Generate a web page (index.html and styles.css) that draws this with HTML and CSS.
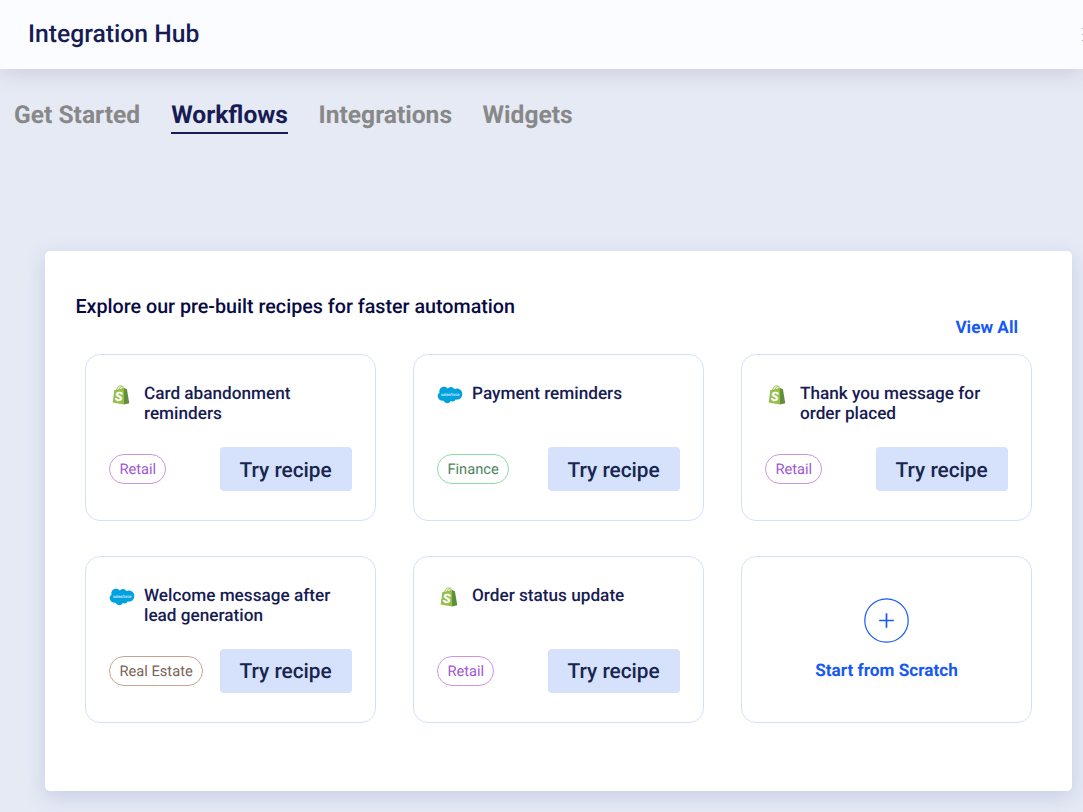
FILE: index.html
```html
<!DOCTYPE html>
<html lang="en">
  <head>
    <meta charset="UTF-8" />
    <meta name="viewport" content="width=device-width, initial-scale=1.0" />
    <title>Integration Hub</title>
    <link rel="stylesheet" href="styles.css">
  </head>
  <body>
    <svg class="sprite" width="0" height="0">
      <symbol id="shopify" viewBox="0 0 18 20">
        <path d="M4.6 5.2C5 2.6 6.700.8 8.500.9c1.500.1 2 1.800 2 3.700M7.200 4.800C7.600 2.500 8.800 1 10 1c1.200 0 1.900 1.300 2 3" fill="none" stroke="#95bf47" stroke-width="0.9" />
        <path d="M2.300 5.200L11.900 2.900V19.500L0.700 17.500z" fill="#95bf47" />
        <path d="M11.900 2.900L14.900 4.300L17.300 18.300L11.900 19.500z" fill="#5e8e3e" />
        <text x="2.700" y="16.300" font-size="13" font-weight="900" font-style="italic" fill="#fff">S</text>
      </symbol>
      <symbol id="salesforce" viewBox="0 0 26 18">
        <path d="M10.700 2.500C12.800.1 16 .5 17.300 3C21.500 1.300 25.300 4 25.300 8C25.300 12 22 14.300 18.700 13.500C17.700 15.500 15.500 15.900 13.800 15C12.300 18 7.900 17.900 6.700 14.700C3.500 15.300 1 13 .7 10.500C.5 8.800 1.300 7.500 2.500 6.800C1.600 3.500 4 .8 6.900.8C8.500.8 9.800 1.400 10.700 2.500z" fill="#00a1e0" />
        <text x="4" y="10" font-size="4.200" fill="#fff" textLength="18.500">sales<tspan font-style="italic">f</tspan>orce</text>
      </symbol>
    </svg>
    <header class="header">
      <h1>Integration Hub</h1>
      <div class="menu"><span></span><span></span><span></span></div>
    </header>
    <nav class="tabs">
      <a>Get Started</a>
      <a class="active">Workflows</a>
      <a>Integrations</a>
      <a>Widgets</a>
    </nav>
    <main class="panel">
      <h2>Explore our pre-built recipes for faster automation</h2>
      <a class="view-all">View All</a>
      <div class="recipes">
        <div class="card">
          <div class="card-top">
            <svg class="shopify"><use href="#shopify" /></svg>
            <h3>Card abandonment<br>reminders</h3>
          </div>
          <div class="card-bottom">
            <span class="tag retail">Retail</span>
            <button class="try">Try recipe</button>
          </div>
        </div>
        <div class="card">
          <div class="card-top">
            <svg class="salesforce"><use href="#salesforce" /></svg>
            <h3>Payment reminders</h3>
          </div>
          <div class="card-bottom">
            <span class="tag finance">Finance</span>
            <button class="try">Try recipe</button>
          </div>
        </div>
        <div class="card">
          <div class="card-top">
            <svg class="shopify"><use href="#shopify" /></svg>
            <h3>Thank you message for<br>order placed</h3>
          </div>
          <div class="card-bottom">
            <span class="tag retail">Retail</span>
            <button class="try">Try recipe</button>
          </div>
        </div>
        <div class="card">
          <div class="card-top">
            <svg class="salesforce"><use href="#salesforce" /></svg>
            <h3>Welcome message after<br>lead generation</h3>
          </div>
          <div class="card-bottom">
            <span class="tag estate">Real Estate</span>
            <button class="try">Try recipe</button>
          </div>
        </div>
        <div class="card">
          <div class="card-top">
            <svg class="shopify"><use href="#shopify" /></svg>
            <h3>Order status update</h3>
          </div>
          <div class="card-bottom">
            <span class="tag retail">Retail</span>
            <button class="try">Try recipe</button>
          </div>
        </div>
        <div class="card scratch">
          <svg class="plus" viewBox="0 0 45 45">
            <circle cx="22.500" cy="22.500" r="21.700" />
            <path d="M22.500 15.200V29.800M15.200 22.500H29.800" />
          </svg>
          <span>Start from Scratch</span>
        </div>
      </div>
    </main>
  </body>
</html>
```
FILE: styles.css
```css
* {
  margin: 0;
  padding: 0;
  box-sizing: border-box;
}
body {
  height: 812px;
  overflow: hidden;
  background-color: #e6eaf5;
  font-family: Roboto, "Liberation Sans", sans-serif;
  color: #171c54;
  text-rendering: geometricPrecision;
}
.sprite {
  display: none;
}
.header {
  height: 69px;
  padding-left: 28px;
  display: flex;
  align-items: center;
  justify-content: space-between;
  background-color: #fbfcff;
  box-shadow: 0 4px 20px rgba(120, 125, 140, 0.25);
}
.header h1 {
  font-size: 24.7px;
  font-weight: 500;
  line-height: 30px;
}
.menu {
  width: 1px;
  display: flex;
  flex-direction: column;
  gap: 5px;
}
.menu span {
  height: 1px;
  background-color: #aaa;
}
.tabs {
  height: 65px;
  padding: 31px 0 0 14px;
  display: flex;
  gap: 30.5px;
}
.tabs a {
  height: 34px;
  font-size: 24.6px;
  font-weight: 700;
  line-height: 31px;
  color: #888;
}
.tabs .active {
  padding-left: 0.5px;
  color: #171c54;
  border-bottom: 2px solid #171c54;
}
.panel {
  width: 1027px;
  height: 540px;
  margin: 117px 0 0 45px;
  padding: 42px 40px 0;
  background-color: #fff;
  border-radius: 5px;
  box-shadow: 0 6px 20px rgba(100, 125, 180, 0.25);
}
.panel h2 {
  margin-left: -9.5px;
  font-size: 19.7px;
  font-weight: 500;
  line-height: 28px;
  color: #080b43;
}
.view-all {
  display: block;
  padding-right: 14px;
  text-align: right;
  font-size: 17.2px;
  font-weight: 700;
  line-height: 14px;
  color: #1759f5;
}
.recipes {
  margin-top: 19px;
  display: grid;
  grid-template-columns: repeat(3, 291px);
  grid-auto-rows: 167px;
  gap: 34.5px 37px;
}
.card {
  padding: 28px 23.4px 0;
  border: 1px solid #d4e0fb;
  border-radius: 15px;
}
.card-top {
  height: 64px;
  display: flex;
}
.card-top svg {
  flex: none;
}
.shopify {
  width: 18px;
  height: 20px;
  margin: 2px 13.6px 0 3px;
}
.salesforce {
  width: 26px;
  height: 18px;
  margin: 3px 9px 0 -0.4px;
}
.card h3 {
  padding-top: 1px;
  font-size: 17.2px;
  font-weight: 500;
  line-height: 20px;
  white-space: nowrap;
}
.card-bottom {
  display: flex;
  align-items: center;
  justify-content: space-between;
}
.tag {
  height: 30px;
  padding: 0 9px;
  border: 1px solid;
  border-radius: 15px;
  font-size: 14.7px;
  line-height: 28px;
}
.retail {
  color: #a156d3;
  border-color: #d093e3;
}
.finance {
  color: #508360;
  border-color: #91dba0;
}
.estate {
  color: #796558;
  border-color: #c8a48e;
}
.try {
  width: 132px;
  height: 44px;
  padding-top: 3px;
  border: none;
  border-radius: 4px;
  background-color: #d6e1fc;
  font-family: inherit;
  font-size: 20.8px;
  font-weight: 500;
  color: #172650;
  text-rendering: inherit;
}
.scratch {
  padding-top: 41px;
  display: flex;
  flex-direction: column;
  align-items: center;
  gap: 18px;
  font-size: 17.2px;
  font-weight: 700;
  line-height: 20px;
  color: #1759f5;
}
.plus {
  width: 45px;
  height: 45px;
  fill: none;
  stroke: #1759f5;
}
.plus circle {
  stroke-width: 1.2;
}
.plus path {
  stroke-width: 1.7;
}
```
